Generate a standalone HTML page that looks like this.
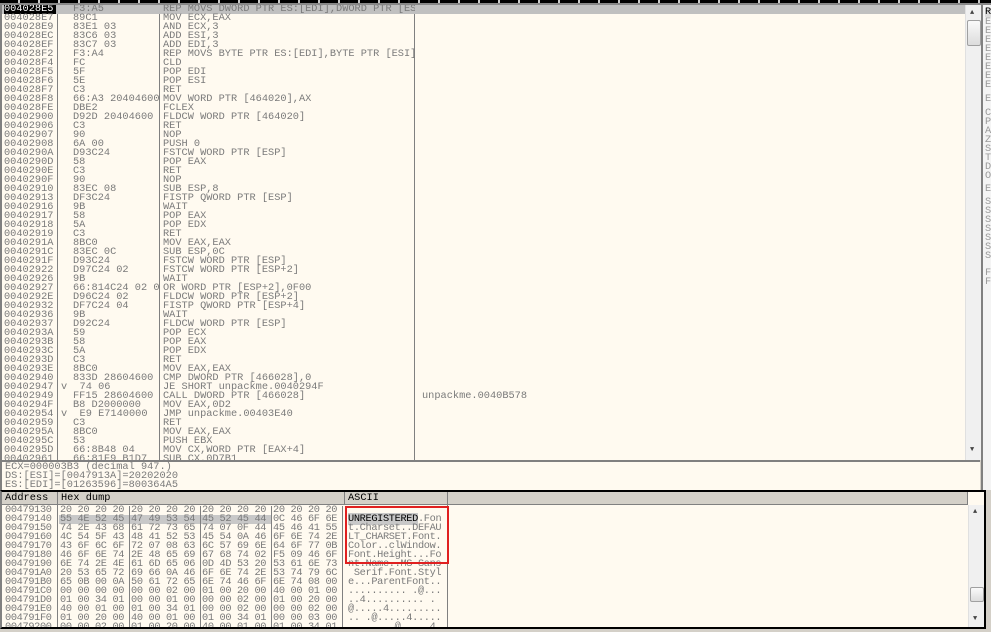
<!DOCTYPE html><html><head><style>
*{margin:0;padding:0;box-sizing:border-box}
body{width:991px;height:632px;overflow:hidden;background:#d4d0c8;font-family:"Liberation Mono",monospace;font-size:10.3px;color:#7a7a7a;position:relative}
.top{position:absolute;left:0;top:0;width:991px;height:5px;background:repeating-linear-gradient(90deg,#000 0 18px,#c8c8c8 18px 20px);border-bottom:2px solid #888}
.dis{position:absolute;left:0;top:5px;width:965px;height:455px;background:#fffaf0;border-left:2px solid #808080;overflow:hidden}
.r{position:absolute;left:0;height:9px;line-height:9px;white-space:pre;width:965px}
.r span{position:absolute;top:0}
.a{left:2px;width:52px}.h{left:71px;width:86px;clip-path:inset(-4px 0 -4px 0)}.d{left:161px;width:252px;clip-path:inset(-4px 0 -4px 0)}.c{left:420px}
.sep{position:absolute;top:0;width:1px;height:455px;background:#808080}
.sel{background:#c0c0c0}
.sel .a{background:#000;color:#fff}
.info{position:absolute;left:0;top:460px;width:980px;height:30px;background:#fffaf0;border-top:2px solid #808080;border-left:2px solid #808080;white-space:pre;line-height:9px;padding-left:3px;padding-top:1px}
.dump{position:absolute;left:0;top:490px;width:986px;height:139px;background:#fffaf0;border:2px solid #000;border-left:2px solid #808080;overflow:hidden}
.hd{position:absolute;top:0;height:13px;line-height:12px;background:#d4d0c8;border-right:1px solid #808080;border-bottom:1px solid #808080;color:#000;padding-left:3px}
.dr{position:absolute;left:0;height:9px;line-height:9px;white-space:pre;width:966px}
.dr span{position:absolute;top:0;letter-spacing:-0.35px}
.g{width:71px;border-right:1px solid #808080;padding-left:1px;color:#7a7a7a}
.sb{position:absolute;background:#f0f0f0;border-left:1px solid #e0e0e0}
.thumb{position:absolute;left:1px;width:14px;background:linear-gradient(#fafafa,#dcdcdc);border:1px solid #a0a0a0;border-radius:2px}
.regs{position:absolute;left:981px;top:5px;width:10px;height:485px;background:#f4f4f4;border-left:2px solid #808080;line-height:9px}
.regs div{position:absolute;left:2px;color:#999}
</style></head><body>
<div class="top"></div>
<div class="dis">
<div class="sep" style="left:55px"></div><div class="sep" style="left:157px"></div><div class="sep" style="left:412px"></div>
<div class="r sel" style="top:0"><span class="a">004028E5</span><span class="h">F3:A5</span><span class="d">REP MOVS DWORD PTR ES:[EDI],DWORD PTR [ESI]</span></div>
<div class="r" style="top:9px"><span class="a">004028E7</span><span class="h">89C1</span><span class="d">MOV ECX,EAX</span></div>
<div class="r" style="top:18px"><span class="a">004028E9</span><span class="h">83E1 03</span><span class="d">AND ECX,3</span></div>
<div class="r" style="top:27px"><span class="a">004028EC</span><span class="h">83C6 03</span><span class="d">ADD ESI,3</span></div>
<div class="r" style="top:36px"><span class="a">004028EF</span><span class="h">83C7 03</span><span class="d">ADD EDI,3</span></div>
<div class="r" style="top:45px"><span class="a">004028F2</span><span class="h">F3:A4</span><span class="d">REP MOVS BYTE PTR ES:[EDI],BYTE PTR [ESI]</span></div>
<div class="r" style="top:54px"><span class="a">004028F4</span><span class="h">FC</span><span class="d">CLD</span></div>
<div class="r" style="top:63px"><span class="a">004028F5</span><span class="h">5F</span><span class="d">POP EDI</span></div>
<div class="r" style="top:72px"><span class="a">004028F6</span><span class="h">5E</span><span class="d">POP ESI</span></div>
<div class="r" style="top:81px"><span class="a">004028F7</span><span class="h">C3</span><span class="d">RET</span></div>
<div class="r" style="top:90px"><span class="a">004028F8</span><span class="h">66:A3 20404600</span><span class="d">MOV WORD PTR [464020],AX</span></div>
<div class="r" style="top:99px"><span class="a">004028FE</span><span class="h">DBE2</span><span class="d">FCLEX</span></div>
<div class="r" style="top:108px"><span class="a">00402900</span><span class="h">D92D 20404600</span><span class="d">FLDCW WORD PTR [464020]</span></div>
<div class="r" style="top:117px"><span class="a">00402906</span><span class="h">C3</span><span class="d">RET</span></div>
<div class="r" style="top:126px"><span class="a">00402907</span><span class="h">90</span><span class="d">NOP</span></div>
<div class="r" style="top:135px"><span class="a">00402908</span><span class="h">6A 00</span><span class="d">PUSH 0</span></div>
<div class="r" style="top:144px"><span class="a">0040290A</span><span class="h">D93C24</span><span class="d">FSTCW WORD PTR [ESP]</span></div>
<div class="r" style="top:153px"><span class="a">0040290D</span><span class="h">58</span><span class="d">POP EAX</span></div>
<div class="r" style="top:162px"><span class="a">0040290E</span><span class="h">C3</span><span class="d">RET</span></div>
<div class="r" style="top:171px"><span class="a">0040290F</span><span class="h">90</span><span class="d">NOP</span></div>
<div class="r" style="top:180px"><span class="a">00402910</span><span class="h">83EC 08</span><span class="d">SUB ESP,8</span></div>
<div class="r" style="top:189px"><span class="a">00402913</span><span class="h">DF3C24</span><span class="d">FISTP QWORD PTR [ESP]</span></div>
<div class="r" style="top:198px"><span class="a">00402916</span><span class="h">9B</span><span class="d">WAIT</span></div>
<div class="r" style="top:207px"><span class="a">00402917</span><span class="h">58</span><span class="d">POP EAX</span></div>
<div class="r" style="top:216px"><span class="a">00402918</span><span class="h">5A</span><span class="d">POP EDX</span></div>
<div class="r" style="top:225px"><span class="a">00402919</span><span class="h">C3</span><span class="d">RET</span></div>
<div class="r" style="top:234px"><span class="a">0040291A</span><span class="h">8BC0</span><span class="d">MOV EAX,EAX</span></div>
<div class="r" style="top:243px"><span class="a">0040291C</span><span class="h">83EC 0C</span><span class="d">SUB ESP,0C</span></div>
<div class="r" style="top:252px"><span class="a">0040291F</span><span class="h">D93C24</span><span class="d">FSTCW WORD PTR [ESP]</span></div>
<div class="r" style="top:261px"><span class="a">00402922</span><span class="h">D97C24 02</span><span class="d">FSTCW WORD PTR [ESP+2]</span></div>
<div class="r" style="top:270px"><span class="a">00402926</span><span class="h">9B</span><span class="d">WAIT</span></div>
<div class="r" style="top:279px"><span class="a">00402927</span><span class="h">66:814C24 02 00</span><span class="d">OR WORD PTR [ESP+2],0F00</span></div>
<div class="r" style="top:288px"><span class="a">0040292E</span><span class="h">D96C24 02</span><span class="d">FLDCW WORD PTR [ESP+2]</span></div>
<div class="r" style="top:297px"><span class="a">00402932</span><span class="h">DF7C24 04</span><span class="d">FISTP QWORD PTR [ESP+4]</span></div>
<div class="r" style="top:306px"><span class="a">00402936</span><span class="h">9B</span><span class="d">WAIT</span></div>
<div class="r" style="top:315px"><span class="a">00402937</span><span class="h">D92C24</span><span class="d">FLDCW WORD PTR [ESP]</span></div>
<div class="r" style="top:324px"><span class="a">0040293A</span><span class="h">59</span><span class="d">POP ECX</span></div>
<div class="r" style="top:333px"><span class="a">0040293B</span><span class="h">58</span><span class="d">POP EAX</span></div>
<div class="r" style="top:342px"><span class="a">0040293C</span><span class="h">5A</span><span class="d">POP EDX</span></div>
<div class="r" style="top:351px"><span class="a">0040293D</span><span class="h">C3</span><span class="d">RET</span></div>
<div class="r" style="top:360px"><span class="a">0040293E</span><span class="h">8BC0</span><span class="d">MOV EAX,EAX</span></div>
<div class="r" style="top:369px"><span class="a">00402940</span><span class="h">833D 28604600 0</span><span class="d">CMP DWORD PTR [466028],0</span></div>
<div class="r" style="top:378px"><span class="a">00402947</span><span class="h" style="left:59px;width:98px">v  74 06</span><span class="d">JE SHORT unpackme.0040294F</span></div>
<div class="r" style="top:387px"><span class="a">00402949</span><span class="h">FF15 28604600</span><span class="d">CALL DWORD PTR [466028]</span><span class="c">unpackme.0040B578</span></div>
<div class="r" style="top:396px"><span class="a">0040294F</span><span class="h">B8 D2000000</span><span class="d">MOV EAX,0D2</span></div>
<div class="r" style="top:405px"><span class="a">00402954</span><span class="h" style="left:59px;width:98px">v  E9 E7140000</span><span class="d">JMP unpackme.00403E40</span></div>
<div class="r" style="top:414px"><span class="a">00402959</span><span class="h">C3</span><span class="d">RET</span></div>
<div class="r" style="top:423px"><span class="a">0040295A</span><span class="h">8BC0</span><span class="d">MOV EAX,EAX</span></div>
<div class="r" style="top:432px"><span class="a">0040295C</span><span class="h">53</span><span class="d">PUSH EBX</span></div>
<div class="r" style="top:441px"><span class="a">0040295D</span><span class="h">66:8B48 04</span><span class="d">MOV CX,WORD PTR [EAX+4]</span></div>
<div class="r" style="top:450px"><span class="a">00402961</span><span class="h">66:81F9 B1D7</span><span class="d">SUB CX,0D7B1</span></div>
</div>
<div class="sb" style="left:965px;top:5px;width:16px;height:455px"><div style="position:absolute;left:4px;top:4px;font-size:7px;color:#444">▲</div><div class="thumb" style="top:15px;height:26px"></div><div style="position:absolute;left:4px;top:441px;font-size:7px;color:#444">▼</div></div>
<div class="regs"><div style="top:3px;color:#000;background:#ddd">R</div>
<div style="top:13px">E</div><div style="top:22px">E</div><div style="top:31px">E</div><div style="top:40px">E</div><div style="top:49px">E</div><div style="top:58px">E</div><div style="top:67px">E</div><div style="top:76px">E</div><div style="top:90px">E</div>
<div style="top:104px">C</div><div style="top:113px">P</div><div style="top:122px">A</div><div style="top:131px">Z</div><div style="top:140px">S</div><div style="top:149px">T</div><div style="top:158px">D</div><div style="top:167px">O</div><div style="top:180px">E</div>
<div style="top:193px">S</div><div style="top:202px">S</div><div style="top:211px">S</div><div style="top:220px">S</div><div style="top:229px">S</div><div style="top:238px">S</div><div style="top:247px">S</div><div style="top:264px">F</div><div style="top:273px">F</div></div>
<div class="info">ECX=000003B3 (decimal 947.)
DS:[ESI]=[0047913A]=20202020
ES:[EDI]=[01263596]=800364A5</div>
<div class="dump">
<div class="hd" style="left:0;width:56px">Address</div>
<div class="hd" style="left:56px;width:287px">Hex dump</div>
<div class="hd" style="left:343px;width:103px">ASCII</div>
<div class="hd" style="left:446px;width:520px"></div>
<div style="position:absolute;left:55px;top:13px;width:1px;height:130px;background:#808080"></div>
<div style="position:absolute;left:445px;top:13px;width:1px;height:130px;background:#808080"></div>
<div class="dr" style="top:14px"><span style="left:3px">00479130</span><span class="g" style="left:57px">20 20 20 20</span><span class="g" style="left:128px">20 20 20 20</span><span class="g" style="left:199px">20 20 20 20</span><span class="g" style="left:270px">20 20 20 20</span><span style="left:346px"></span></div>
<div class="dr" style="top:23px"><span style="left:3px">00479140</span><span class="g" style="left:57px;background:#c8c8c8">55 4E 52 45</span><span class="g" style="left:128px;background:#c8c8c8">47 49 53 54</span><span class="g" style="left:199px;background:#c8c8c8">45 52 45 44</span><span class="g" style="left:270px">0C 46 6F 6E</span><span style="left:346px"><b style="font-weight:normal;background:#c8c8c8;color:#000">UNREGISTERED</b>.Fon</span></div>
<div class="dr" style="top:32px"><span style="left:3px">00479150</span><span class="g" style="left:57px">74 2E 43 68</span><span class="g" style="left:128px">61 72 73 65</span><span class="g" style="left:199px">74 07 0F 44</span><span class="g" style="left:270px">45 46 41 55</span><span style="left:346px">t.Charset..DEFAU</span></div>
<div class="dr" style="top:41px"><span style="left:3px">00479160</span><span class="g" style="left:57px">4C 54 5F 43</span><span class="g" style="left:128px">48 41 52 53</span><span class="g" style="left:199px">45 54 0A 46</span><span class="g" style="left:270px">6F 6E 74 2E</span><span style="left:346px">LT_CHARSET.Font.</span></div>
<div class="dr" style="top:50px"><span style="left:3px">00479170</span><span class="g" style="left:57px">43 6F 6C 6F</span><span class="g" style="left:128px">72 07 08 63</span><span class="g" style="left:199px">6C 57 69 6E</span><span class="g" style="left:270px">64 6F 77 0B</span><span style="left:346px">Color..clWindow.</span></div>
<div class="dr" style="top:59px"><span style="left:3px">00479180</span><span class="g" style="left:57px">46 6F 6E 74</span><span class="g" style="left:128px">2E 48 65 69</span><span class="g" style="left:199px">67 68 74 02</span><span class="g" style="left:270px">F5 09 46 6F</span><span style="left:346px">Font.Height...Fo</span></div>
<div class="dr" style="top:68px"><span style="left:3px">00479190</span><span class="g" style="left:57px">6E 74 2E 4E</span><span class="g" style="left:128px">61 6D 65 06</span><span class="g" style="left:199px">0D 4D 53 20</span><span class="g" style="left:270px">53 61 6E 73</span><span style="left:346px">nt.Name..MS Sans</span></div>
<div class="dr" style="top:77px"><span style="left:3px">004791A0</span><span class="g" style="left:57px">20 53 65 72</span><span class="g" style="left:128px">69 66 0A 46</span><span class="g" style="left:199px">6F 6E 74 2E</span><span class="g" style="left:270px">53 74 79 6C</span><span style="left:346px"> Serif.Font.Styl</span></div>
<div class="dr" style="top:86px"><span style="left:3px">004791B0</span><span class="g" style="left:57px">65 0B 00 0A</span><span class="g" style="left:128px">50 61 72 65</span><span class="g" style="left:199px">6E 74 46 6F</span><span class="g" style="left:270px">6E 74 08 00</span><span style="left:346px">e...ParentFont..</span></div>
<div class="dr" style="top:95px"><span style="left:3px">004791C0</span><span class="g" style="left:57px">00 00 00 00</span><span class="g" style="left:128px">00 00 02 00</span><span class="g" style="left:199px">01 00 20 00</span><span class="g" style="left:270px">40 00 01 00</span><span style="left:346px">.......... .@...</span></div>
<div class="dr" style="top:104px"><span style="left:3px">004791D0</span><span class="g" style="left:57px">01 00 34 01</span><span class="g" style="left:128px">00 00 01 00</span><span class="g" style="left:199px">00 00 02 00</span><span class="g" style="left:270px">01 00 20 00</span><span style="left:346px">..4.......... .</span></div>
<div class="dr" style="top:113px"><span style="left:3px">004791E0</span><span class="g" style="left:57px">40 00 01 00</span><span class="g" style="left:128px">01 00 34 01</span><span class="g" style="left:199px">00 00 02 00</span><span class="g" style="left:270px">00 00 02 00</span><span style="left:346px">@.....4.........</span></div>
<div class="dr" style="top:122px"><span style="left:3px">004791F0</span><span class="g" style="left:57px">01 00 20 00</span><span class="g" style="left:128px">40 00 01 00</span><span class="g" style="left:199px">01 00 34 01</span><span class="g" style="left:270px">00 00 03 00</span><span style="left:346px">.. .@.....4.....</span></div>
<div class="dr" style="top:131px"><span style="left:3px">00479200</span><span class="g" style="left:57px">00 00 02 00</span><span class="g" style="left:128px">01 00 20 00</span><span class="g" style="left:199px">40 00 01 00</span><span class="g" style="left:270px">01 00 34 01</span><span style="left:346px">...... .@.....4.</span></div>
<div style="position:absolute;left:343px;top:14px;width:104px;height:58px;border:2px solid #e02020"></div>
<div class="sb" style="left:966px;top:13px;width:16px;height:122px"><div style="position:absolute;left:4px;top:3px;font-size:7px;color:#444">▲</div><div class="thumb" style="top:82px;height:15px"></div><div style="position:absolute;left:4px;top:110px;font-size:7px;color:#444">▼</div></div>
</div>
</body></html>
